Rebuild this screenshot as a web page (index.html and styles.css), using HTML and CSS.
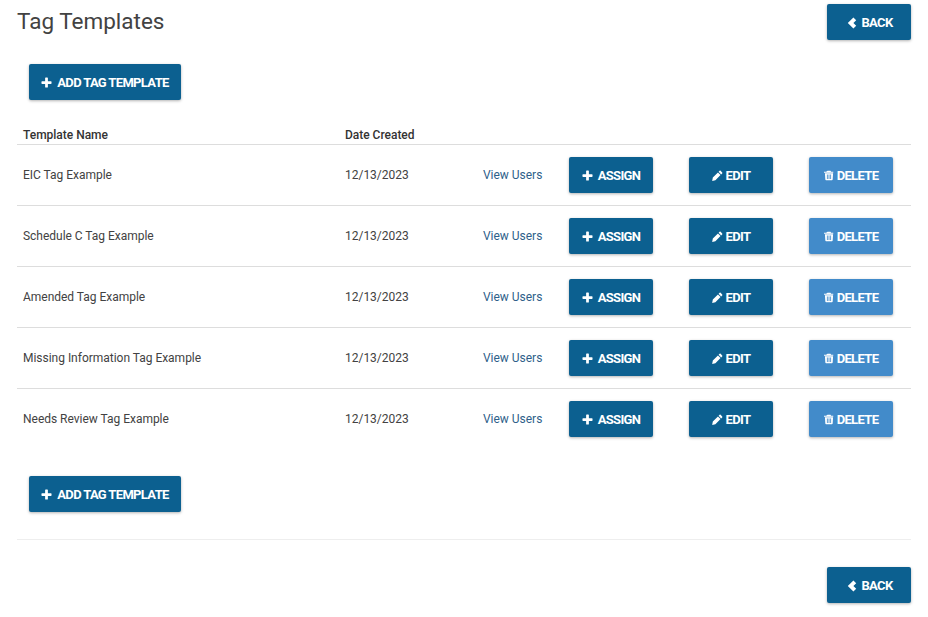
FILE: index.html
```html
<!DOCTYPE html>
<html lang="en">
<head>
<meta charset="utf-8">
<title>Tag Templates</title>
<link rel="stylesheet" href="styles.css">
</head>
<body>
<svg class="defs" width="0" height="0" aria-hidden="true">
  <symbol id="i-plus" viewBox="0 0 12 12"><path d="M4.5 1.2a.7.7 0 0 1 .7-.7h1.6a.7.7 0 0 1 .7.7v3.3h3.3a.7.7 0 0 1 .7.7v1.6a.7.7 0 0 1-.7.7H7.500v3.300a.7.7 0 0 1-.7.7H5.200a.7.7 0 0 1-.7-.7V7.500H1.200a.7.7 0 0 1-.7-.7V5.200a.7.7 0 0 1 .7-.7h3.300z"/></symbol>
  <symbol id="i-back" viewBox="0 0 10 12"><path d="M6.400.4 9.200 3.200 6.400 6l2.800 2.800-2.800 2.800L.8 6z"/></symbol>
  <symbol id="i-edit" viewBox="0 0 12 12"><path d="M8.300.9a.8.8 0 0 1 1.100 0l1.700 1.700a.8.8 0 0 1 0 1.100L10 4.800 7.200 2zM6.500 2.700l2.800 2.800-5.600 5.600-3.500.8.700-3.600z"/></symbol>
  <symbol id="i-trash" viewBox="0 0 12 12"><path fill-rule="evenodd" d="M4.200.3h3.600l.7 1.300h2.600v1.200H-.1V1.600h2.600zM1.100 3.400h9.800l-.5 7.500a.9.9 0 0 1-.9.8H2.500a.9.9 0 0 1-.9-.8zm2.400 1.300v5.500h1V4.700zm2 0v5.500h1V4.700zm2 0v5.500h1V4.700z"/></symbol>
</svg>
<main class="page">
  <header class="top">
    <h1 class="title">Tag Templates</h1>
    <a class="btn btn-back"><svg class="ico ico-back"><use href="#i-back"/></svg>BACK</a>
  </header>
  <div class="add-row add-row-top">
    <a class="btn btn-add"><svg class="ico"><use href="#i-plus"/></svg>ADD TAG TEMPLATE</a>
  </div>
  <section class="table">
    <div class="row head">
      <div>Template Name</div>
      <div>Date Created</div>
    </div>
    <div class="row">
      <div>EIC Tag Example</div>
      <div>12/13/2023</div>
      <a class="link">View Users</a>
      <a class="btn"><svg class="ico"><use href="#i-plus"/></svg>ASSIGN</a>
      <a class="btn"><svg class="ico ico-edit"><use href="#i-edit"/></svg>EDIT</a>
      <a class="btn btn-del"><svg class="ico ico-trash"><use href="#i-trash"/></svg>DELETE</a>
    </div>
    <div class="row">
      <div>Schedule C Tag Example</div>
      <div>12/13/2023</div>
      <a class="link">View Users</a>
      <a class="btn"><svg class="ico"><use href="#i-plus"/></svg>ASSIGN</a>
      <a class="btn"><svg class="ico ico-edit"><use href="#i-edit"/></svg>EDIT</a>
      <a class="btn btn-del"><svg class="ico ico-trash"><use href="#i-trash"/></svg>DELETE</a>
    </div>
    <div class="row">
      <div>Amended Tag Example</div>
      <div>12/13/2023</div>
      <a class="link">View Users</a>
      <a class="btn"><svg class="ico"><use href="#i-plus"/></svg>ASSIGN</a>
      <a class="btn"><svg class="ico ico-edit"><use href="#i-edit"/></svg>EDIT</a>
      <a class="btn btn-del"><svg class="ico ico-trash"><use href="#i-trash"/></svg>DELETE</a>
    </div>
    <div class="row">
      <div>Missing Information Tag Example</div>
      <div>12/13/2023</div>
      <a class="link">View Users</a>
      <a class="btn"><svg class="ico"><use href="#i-plus"/></svg>ASSIGN</a>
      <a class="btn"><svg class="ico ico-edit"><use href="#i-edit"/></svg>EDIT</a>
      <a class="btn btn-del"><svg class="ico ico-trash"><use href="#i-trash"/></svg>DELETE</a>
    </div>
    <div class="row">
      <div>Needs Review Tag Example</div>
      <div>12/13/2023</div>
      <a class="link">View Users</a>
      <a class="btn"><svg class="ico"><use href="#i-plus"/></svg>ASSIGN</a>
      <a class="btn"><svg class="ico ico-edit"><use href="#i-edit"/></svg>EDIT</a>
      <a class="btn btn-del"><svg class="ico ico-trash"><use href="#i-trash"/></svg>DELETE</a>
    </div>
  </section>
  <div class="add-row add-row-bottom">
    <a class="btn btn-add"><svg class="ico"><use href="#i-plus"/></svg>ADD TAG TEMPLATE</a>
  </div>
  <hr class="rule">
  <footer class="bottom">
    <a class="btn btn-back"><svg class="ico ico-back"><use href="#i-back"/></svg>BACK</a>
  </footer>
</main>
</body>
</html>
```
FILE: styles.css
```css
* { box-sizing: border-box; }
html, body { margin: 0; padding: 0; background: #fff; }
body { font-family: Roboto, "Liberation Sans", sans-serif; color: #424242; font-size: 12px; overflow: hidden; height: 617px; }
.defs { position: absolute; }
.page { padding: 4px 17px 0; width: 928px; }
.top { display: flex; justify-content: space-between; align-items: flex-start; height: 36px; }
.title { margin: -1px 0 0; font-size: 22.5px; font-weight: 400; line-height: 36px; }
.add-row { padding-left: 12px; }
.add-row-top { margin-top: 24px; }
.add-row-bottom { margin-top: 27px; }
.btn {
  display: flex; align-items: center; justify-content: center; gap: 4px;
  width: 84px; height: 36px; padding-top: 1px; background: #0c6090; color: #fff;
  font-size: 13px; font-weight: 700; letter-spacing: -0.65px; line-height: 1;
  border-radius: 2px; box-shadow: 0 1px 3px rgba(0,0,0,.3);
}
.btn-add { width: 152px; }
.btn-del { background: #428bca; }
.btn-back { padding-left: 2px; }
.ico { width: 11px; height: 11px; fill: currentColor; flex: none; margin-right: 1px; }
.ico-back { width: 10px; height: 12px; margin-right: 0; }
.ico-edit { width: 11px; height: 11px; margin-right: -1px; }
.ico-trash { width: 10px; height: 11px; margin-right: -1px; }
.table { margin-top: 27px; }
.row {
  display: grid; grid-template-columns: 322px 138px 86px 84px 84px 84px;
  align-items: center; height: 61px; padding-left: 6px;
  letter-spacing: -0.02px;
  border-bottom: 1px solid #ddd;
}
.row > :nth-child(5) { margin-left: 36px; }
.row > :nth-child(6) { margin-left: 72px; }
.row:last-child { border-bottom: 0; height: 60px; }
.row > div { line-height: 16px; }
.head { height: 18px; align-items: start; font-weight: 500; color: #333; }
.link { color: #2f5f8a; }
.rule { border: 0; border-top: 1px solid #eee; margin: 27px 0 0; }
.bottom { display: flex; justify-content: flex-end; margin-top: 27px; }
```
